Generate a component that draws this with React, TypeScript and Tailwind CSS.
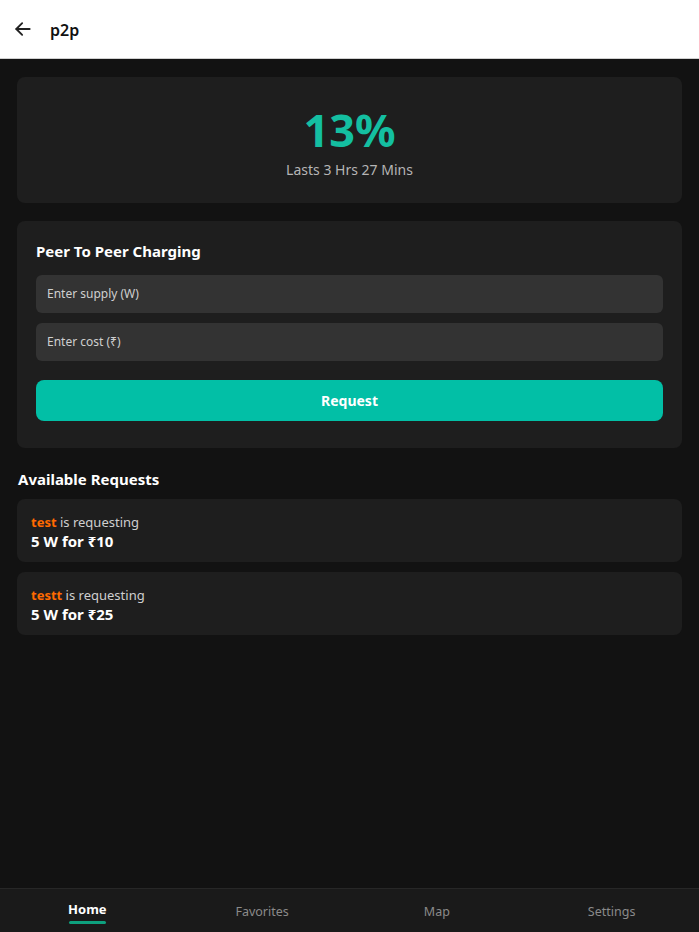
import React from "react";

const font = { fontFamily: '"Noto Sans", "Open Sans", sans-serif' };

function RequestCard({ name, amount }: { name: string; amount: string }) {
  return (
    <div className="bg-[#1e1e1e] rounded-lg h-[63px] px-[14px] pt-[14px]">
      <div className="text-[13px] leading-[18px] text-[#cfcfcf]">
        <span className="font-bold text-[#ff6a00]">{name}</span> is requesting
      </div>
      <div className="text-[15px] leading-[20px] font-bold text-white">{amount}</div>
    </div>
  );
}

export default function App() {
  const tabs = ["Home", "Favorites", "Map", "Settings"];
  return (
    <div className="w-[699px] h-[932px] bg-[#121212] flex flex-col" style={font}>
      <header className="h-[59px] bg-white border-b border-[#d0d0d0] flex items-center shrink-0">
        <svg className="ml-[13px]" width="20" height="20" viewBox="0 0 24 24" fill="none" stroke="#222" strokeWidth="2.2" strokeLinecap="round" strokeLinejoin="round">
          <path d="M20 12H4" />
          <path d="M11 5l-7 7 7 7" />
        </svg>
        <span className="ml-[17px] text-[16px] font-semibold text-[#111] leading-none mt-[2px]">p2p</span>
      </header>

      <main className="flex-1 px-[17px] pt-[18px] flex flex-col">
        <div className="bg-[#1e1e1e] rounded-lg h-[126px] flex flex-col items-center pt-[24px]">
          <div className="text-[45px] leading-[58px] font-bold text-[#14bfa1]">13%</div>
          <div className="text-[14px] leading-[20px] text-[#b5b5b5] mt-[1px]">Lasts 3 Hrs 27 Mins</div>
        </div>

        <div className="bg-[#1e1e1e] rounded-lg mt-[18px] px-[19px] pt-[19px] pb-[27px]">
          <div className="text-[15px] leading-[22px] font-bold text-white">Peer To Peer Charging</div>
          <div className="mt-[13px] h-[38px] bg-[#333333] rounded-md flex items-center px-[11px] text-[12px] text-[#cfcfcf]">
            Enter supply (W)
          </div>
          <div className="mt-[10px] h-[38px] bg-[#333333] rounded-md flex items-center px-[11px] text-[12px] text-[#cfcfcf]">
            Enter cost (₹)
          </div>
          <button className="mt-[19px] w-full h-[41px] bg-[#02bfa6] rounded-lg text-white font-bold text-[14px]">
            Request
          </button>
        </div>

        <div className="mt-[20px] text-[15px] leading-[22px] font-bold text-white pl-px">Available Requests</div>
        <div className="mt-[9px] flex flex-col gap-[10px]">
          <RequestCard name="test" amount="5 W for ₹10" />
          <RequestCard name="testt" amount="5 W for ₹25" />
        </div>
      </main>

      <nav className="h-[44px] bg-[#1a1a1a] border-t border-[#272727] grid grid-cols-4 shrink-0">
        {tabs.map((t, i) => (
          <div key={t} className="flex justify-center pt-[11px]">
            {i === 0 ? (
              <div className="flex flex-col items-center">
                <span className="text-[13px] leading-[18px] font-bold text-white">{t}</span>
                <span className="mt-[3px] h-[3px] w-[37px] bg-[#0ea07e] rounded-sm" />
              </div>
            ) : (
              <span className="text-[12.5px] leading-[18px] text-[#8a8a8a] mt-[3px]">{t}</span>
            )}
          </div>
        ))}
      </nav>
    </div>
  );
}
